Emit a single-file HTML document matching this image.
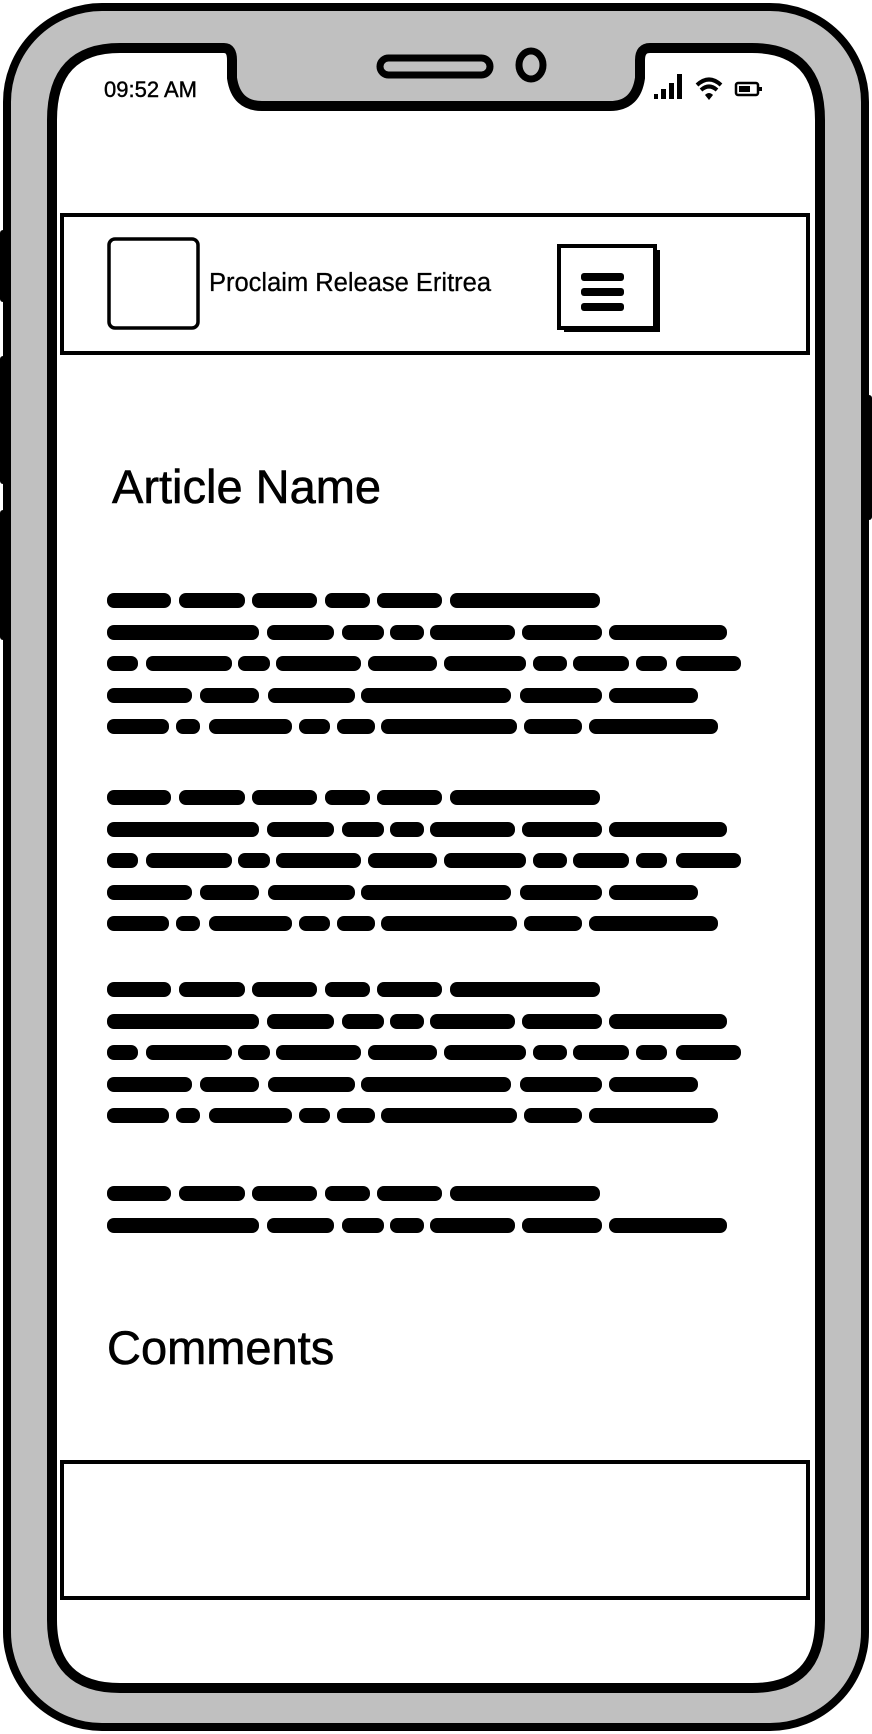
<!DOCTYPE html>
<html><head><meta charset="utf-8"><style>
html,body{margin:0;padding:0;background:#fff;width:872px;height:1734px;overflow:hidden}
svg{display:block}
text{font-family:"Liberation Sans",sans-serif;fill:#000}
</style></head><body>
<svg width="872" height="1734" viewBox="0 0 872 1734" xmlns="http://www.w3.org/2000/svg">
<defs>
<g id="l1"><rect x="107" y="0" width="64" height="15" rx="7"/><rect x="179" y="0" width="66" height="15" rx="7"/><rect x="252" y="0" width="65" height="15" rx="7"/><rect x="325" y="0" width="45" height="15" rx="7"/><rect x="377" y="0" width="65" height="15" rx="7"/><rect x="450" y="0" width="150" height="15" rx="7"/>
<rect x="107" y="32" width="152" height="15" rx="7"/><rect x="267" y="32" width="67" height="15" rx="7"/><rect x="342" y="32" width="42" height="15" rx="7"/><rect x="390" y="32" width="34" height="15" rx="7"/><rect x="430" y="32" width="85" height="15" rx="7"/><rect x="522" y="32" width="80" height="15" rx="7"/><rect x="609" y="32" width="118" height="15" rx="7"/></g>
<g id="para" fill="#000">
<use href="#l1"/>
<rect x="107" y="63" width="31" height="15" rx="7"/><rect x="146" y="63" width="86" height="15" rx="7"/><rect x="238" y="63" width="32" height="15" rx="7"/><rect x="276" y="63" width="85" height="15" rx="7"/><rect x="368" y="63" width="69" height="15" rx="7"/><rect x="444" y="63" width="82" height="15" rx="7"/><rect x="533" y="63" width="34" height="15" rx="7"/><rect x="573" y="63" width="56" height="15" rx="7"/><rect x="636" y="63" width="31" height="15" rx="7"/><rect x="676" y="63" width="65" height="15" rx="7"/>
<rect x="107" y="95" width="85" height="15" rx="7"/><rect x="200" y="95" width="59" height="15" rx="7"/><rect x="268" y="95" width="87" height="15" rx="7"/><rect x="361" y="95" width="150" height="15" rx="7"/><rect x="520" y="95" width="82" height="15" rx="7"/><rect x="609" y="95" width="89" height="15" rx="7"/>
<rect x="107" y="126" width="62" height="15" rx="7"/><rect x="176" y="126" width="24" height="15" rx="7"/><rect x="209" y="126" width="83" height="15" rx="7"/><rect x="299" y="126" width="31" height="15" rx="7"/><rect x="337" y="126" width="38" height="15" rx="7"/><rect x="381" y="126" width="136" height="15" rx="7"/><rect x="524" y="126" width="58" height="15" rx="7"/><rect x="589" y="126" width="129" height="15" rx="7"/>
</g>
</defs>
<rect x="0" y="230" width="10" height="72" rx="3"/><rect x="0" y="356" width="10" height="128" rx="3"/><rect x="0" y="510" width="10" height="130" rx="3"/><rect x="860" y="395" width="12" height="125" rx="3"/>
<rect x="7" y="7" width="858" height="1720" rx="95" fill="#c0c0c0" stroke="#000" stroke-width="8"/>
<path d="M120 48 H224 Q232 48 232 60 V78 Q236 106 262 106 H610 Q636 106 640 78 V60 Q640 48 650 48 H752 Q820 48 820 120 V1620 Q820 1688 752 1688 H120 Q52 1688 52 1620 V120 Q52 48 120 48 Z" fill="#fff" stroke="#000" stroke-width="10"/>
<rect x="380" y="58" width="110" height="17" rx="8.5" fill="none" stroke="#000" stroke-width="7"/>
<ellipse cx="531" cy="65" rx="12" ry="14" fill="none" stroke="#000" stroke-width="7"/>
<text x="104" y="97" font-size="22" stroke="#000" stroke-width="0.4">09:52 AM</text>
<rect x="654" y="94" width="4" height="5"/><rect x="661" y="89" width="5" height="10"/><rect x="669" y="83" width="5" height="16"/><rect x="677" y="74" width="5" height="25"/>
<path d="M697 85 Q709 74 721 85" fill="none" stroke="#000" stroke-width="4"/><path d="M701 90 Q709 83 717 90" fill="none" stroke="#000" stroke-width="4"/><path d="M705 95 L709 100 L713 95 Q709 91 705 95Z"/>
<rect x="736" y="83" width="22" height="12" rx="2" fill="none" stroke="#000" stroke-width="2.5"/><rect x="739" y="86" width="11" height="6"/><rect x="759" y="87" width="3" height="4"/>
<rect x="62" y="215" width="746" height="138" fill="#fff" stroke="#000" stroke-width="4"/>
<rect x="109" y="239" width="89" height="89" rx="6" fill="#fff" stroke="#000" stroke-width="3.5"/>
<text x="209" y="291" font-size="25.5" stroke="#000" stroke-width="0.3">Proclaim Release Eritrea</text>
<rect x="564" y="250" width="96" height="82" fill="#000"/>
<rect x="559" y="246" width="96" height="82" fill="#fff" stroke="#000" stroke-width="4"/>
<rect x="581" y="273" width="43" height="8" rx="3"/><rect x="581" y="288" width="43" height="8" rx="3"/><rect x="581" y="303" width="43" height="8" rx="3"/>
<text x="112" y="503" font-size="47" stroke="#000" stroke-width="0.6">Article Name</text>
<use href="#para" transform="translate(0,593)"/>
<use href="#para" transform="translate(0,790)"/>
<use href="#para" transform="translate(0,982)"/>
<use href="#l1" transform="translate(0,1186)"/>
<text x="107" y="1364" font-size="47" stroke="#000" stroke-width="0.6">Comments</text>
<rect x="62" y="1462" width="746" height="136" fill="#fff" stroke="#000" stroke-width="4"/>
</svg>
</body></html>
